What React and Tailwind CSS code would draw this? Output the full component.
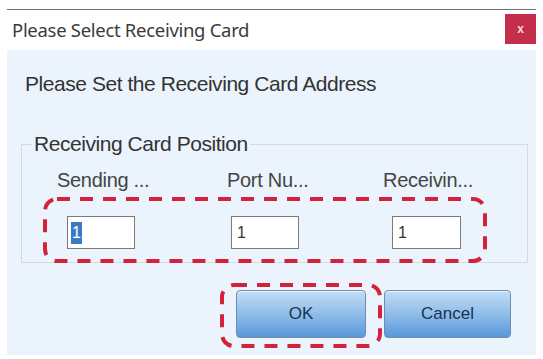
export default function App() {
  const sans = { fontFamily: '"Liberation Sans", Arial, sans-serif' };
  return (
    <div className="relative w-[543px] h-[359px] bg-white overflow-hidden" style={sans}>
      <div className="mx-[7px] mt-[9px] border-t-[1.5px] border-[#6f6f6f]" />
      <div className="h-[40px] flex items-start justify-between pl-[12px] pr-[7px]">
        <div className="mt-[8px] text-[18.5px] leading-[24px] text-[#3b3b3b] tracking-[-0.3px]" style={{ fontFamily: '"Noto Sans", "Open Sans", sans-serif' }}>
          Please Select Receiving Card
        </div>
        <div className="mt-[4px] w-[31px] h-[30px] bg-[#c32f4b] flex items-center justify-center text-[#f6d9df] text-[12px] font-bold leading-none">
          x
        </div>
      </div>
      <div className="mx-[7px] h-[305px] bg-[#ebf4fc] pt-[22px]">
        <div className="pl-[18px] text-[21px] leading-[24px] text-[#333] tracking-[-0.45px]">
          Please Set the Receiving Card Address
        </div>
        <fieldset className="ml-[14px] mr-[8px] mt-[36px] border border-[#d3dae2] h-[131px] pb-[16px]">
          <legend className="ml-[10px] px-[2px] text-[21px] leading-[24px] text-[#333] tracking-[-0.45px]">
            Receiving Card Position
          </legend>
          <div className="flex pt-[12px] text-[20px] leading-[24px] text-[#444] tracking-[-0.3px]">
            <div className="ml-[35px] w-[170px] flex flex-col">
              <div>Sending&nbsp;...</div>
              <div className="mt-[24px] ml-[10px] w-[68px] h-[33px] border-[1.5px] border-[#7a7a7a] bg-white flex items-center pl-[3px]">
                <span className="bg-[#3b79c6] text-white text-[16px] leading-[22px] px-[1px]">1</span>
              </div>
            </div>
            <div className="w-[156px] flex flex-col">
              <div>Port Nu...</div>
              <div className="mt-[24px] ml-[4px] w-[68px] h-[33px] border-[1.5px] border-[#7a7a7a] bg-white flex items-center pl-[5px] text-[16px] text-[#333]">
                1
              </div>
            </div>
            <div className="flex flex-col">
              <div>Receivin...</div>
              <div className="mt-[24px] ml-[9px] w-[69px] h-[33px] border-[1.5px] border-[#7a7a7a] bg-white flex items-center pl-[5px] text-[16px] text-[#333]">
                1
              </div>
            </div>
          </div>
        </fieldset>
        <div className="flex justify-end gap-[18px] pr-[25px] mt-[27px]">
          <button className="w-[130px] h-[48px] rounded-[4px] border border-[#6f8db0] bg-gradient-to-b from-[#c2ddf5] via-[#8fbde9] to-[#5a97db] text-[17px] text-[#1b3152] shadow-[inset_0_1px_0_rgba(255,255,255,0.7)]">
            OK
          </button>
          <button className="w-[127px] h-[48px] rounded-[4px] border border-[#6f8db0] bg-gradient-to-b from-[#c2ddf5] via-[#8fbde9] to-[#5a97db] text-[17px] text-[#1b3152] shadow-[inset_0_1px_0_rgba(255,255,255,0.7)]">
            Cancel
          </button>
        </div>
      </div>
      <svg className="absolute left-0 top-0 pointer-events-none" width="543" height="359">
        <rect x="45" y="199" width="440" height="62" rx="12" fill="none" stroke="#d2233a" strokeWidth="4" strokeDasharray="13 10" />
        <rect x="222" y="285" width="158" height="61" rx="12" fill="none" stroke="#d2233a" strokeWidth="4" strokeDasharray="13 10" />
      </svg>
    </div>
  );
}
